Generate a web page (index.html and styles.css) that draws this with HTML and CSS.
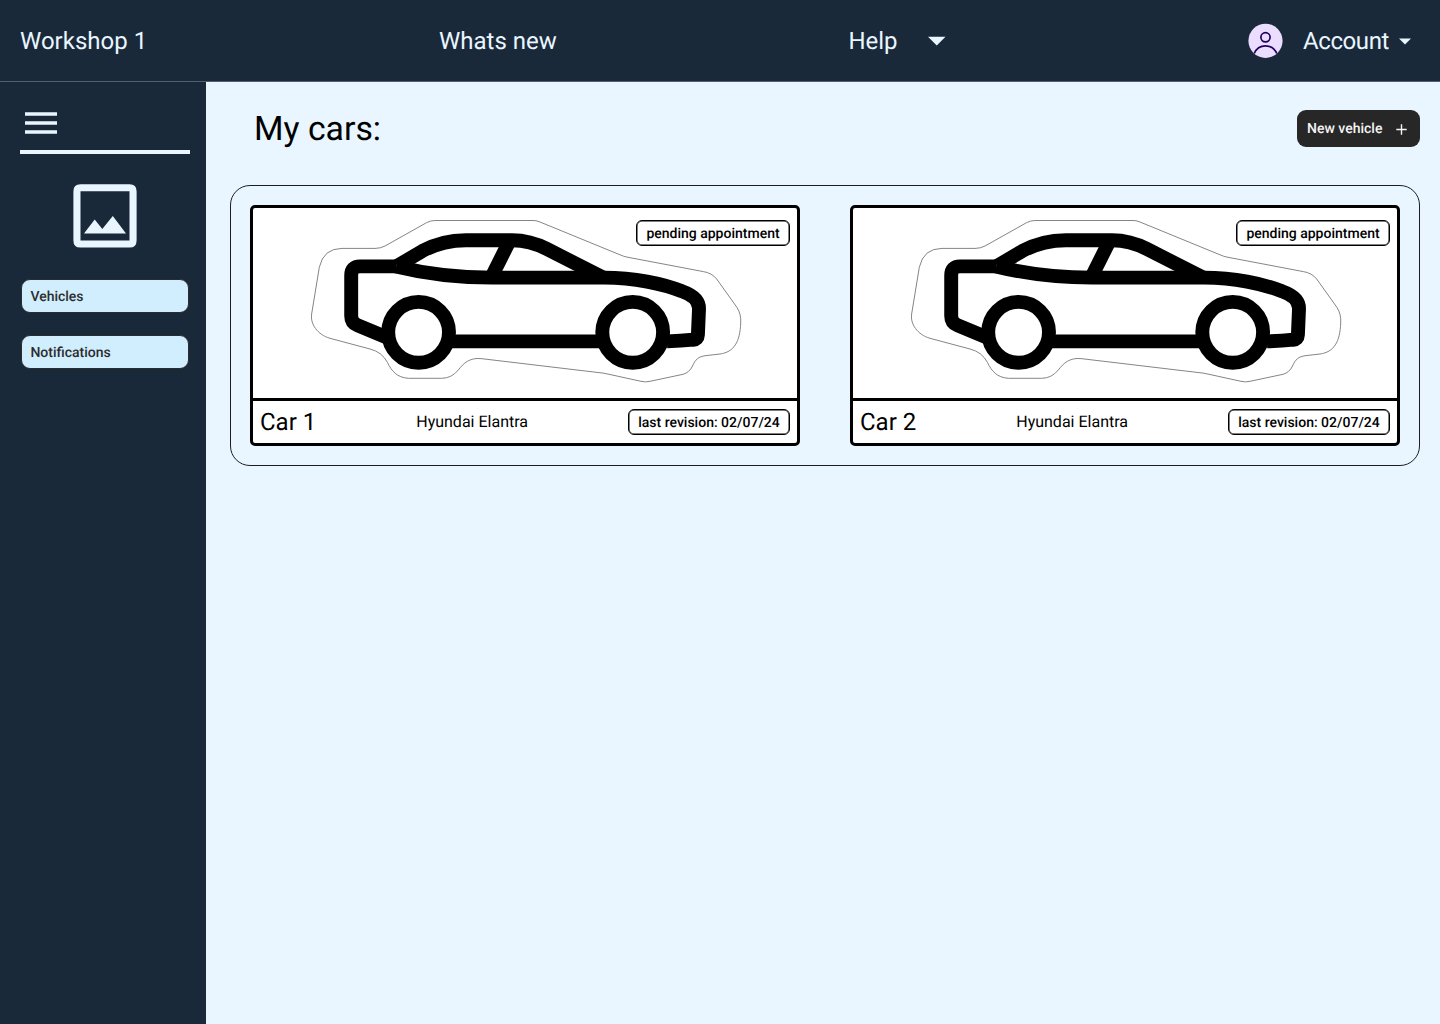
FILE: index.html
```html
<!DOCTYPE html>
<html lang="en">
<head>
<meta charset="utf-8">
<title>Workshop 1</title>
<link rel="stylesheet" href="styles.css">
</head>
<body>
<svg class="defs" aria-hidden="true">
  <symbol id="car" viewBox="253 208 544 190">
    <path class="halo" d="M311.8 313 L319.3 267.3 Q323.500 248.400 342 248.400 H375 Q380.500 248.400 385 246 L426.500 222.700 Q430.500 220.500 435 220.500 H533 Q536 220.500 539 221.600 L620 254.800 Q623.500 256.400 627 257.100 L703.300 271.600 Q711.500 272.800 716.700 279 L737 307.500 Q741.300 314 740.700 323 C740 342 734 352 720 354 L706 355.600 C698 356.600 695.500 359.500 692.500 366 Q689.500 372.500 683 374.300 L650 381.300 Q645.500 382.500 641 381.300 L610 374.500 L603 373.100 L481 358.600 C470 357.500 463.500 363 458.300 370 Q451.500 378.300 441.700 378.300 H408.300 C397 377.500 391.500 371 387.500 362.500 Q382 352 370 349 L330 338.300 C318 335 309.500 324 311.800 313 Z"/>
    <g class="body">
      <path d="M396 266.400 H360 Q351.200 266.400 351.200 275.500 V316 Q351.200 322.800 357.500 325.300 L387 337.500"/>
      <path d="M396 266.400 C426 273.800 457 277.500 492 277.600 H604 C634 277.700 663 283.500 682 291.300 Q699.400 297.500 699 309 L697.900 335 Q697.700 339.400 693.300 339.700 Q681 341 667 341.400"/>
      <path d="M450 341.400 H601"/>
      <path d="M397 266 L422 251.200 Q442 240.200 466 240.200 H512 Q530 240.200 547 249 L603 277.500"/>
      <path d="M509.500 241 L493 274"/>
      <circle cx="418.600" cy="332.300" r="30.400"/>
      <circle cx="632.700" cy="332.300" r="30.400"/>
    </g>
  </symbol>
</svg>

<header class="topbar">
  <a class="nav-item">Workshop 1</a>
  <a class="nav-item">Whats new</a>
  <a class="nav-item nav-help">Help
    <svg class="caret" width="18" height="11" viewBox="0 0 18 11"><path d="M0 1.700H17.500L8.750 10.500Z"/></svg>
  </a>
  <a class="nav-item nav-account">
    <svg class="avatar" width="36" height="36" viewBox="0 0 36 36">
      <circle class="avatar-bg" cx="17.500" cy="17.800" r="17.100"/>
      <circle class="avatar-line" cx="17.500" cy="14.300" r="4.600"/>
      <path class="avatar-line" d="M6.200 30.500 C10.500 20.300 24.500 20.300 28.800 30.500"/>
    </svg>
    <span>Account</span>
    <svg class="caret" width="12" height="8" viewBox="0 0 12 8"><path d="M0 1.500H12L6 7.500Z"/></svg>
  </a>
</header>

<div class="layout">
  <aside class="sidebar">
    <div class="menu">
      <svg width="32" height="22" viewBox="0 0 32 22"><path d="M0 .2H32V3.700H0ZM0 9.200H32V12.700H0ZM0 18.200H32V21.700H0Z"/></svg>
    </div>
    <svg class="picture" width="64" height="64" viewBox="0 0 64 64">
      <path fill-rule="evenodd" d="M7.500 .2H56.500Q63.600 .2 63.600 7.200V56.500Q63.600 63.600 56.500 63.600H7.500Q.4 63.600 .4 56.500V7.200Q.4 .2 7.500 .2ZM7.500 7.300V56.500H56.500V7.300ZM11 49.400L21.700 35.400L29.300 44.900L39.800 31.900L53 49.400Z"/>
    </svg>
    <a class="side-link">Vehicles</a>
    <a class="side-link">Notifications</a>
  </aside>

  <main class="content">
    <div class="heading">
      <h1>My cars:</h1>
      <button class="new-vehicle">New vehicle
        <svg width="11" height="11" viewBox="0 0 11 11"><path d="M5.500 .3V10.700M.3 5.500H10.700"/></svg>
      </button>
    </div>
    <section class="cars">
      <article class="card">
        <div class="media">
          <svg class="car"><use href="#car"/></svg>
          <span class="tag pending">pending appointment</span>
        </div>
        <div class="info">
          <h2>Car 1</h2>
          <span class="model">Hyundai Elantra</span>
          <span class="tag">last revision: 02/07/24</span>
        </div>
      </article>
      <article class="card">
        <div class="media">
          <svg class="car"><use href="#car"/></svg>
          <span class="tag pending">pending appointment</span>
        </div>
        <div class="info">
          <h2>Car 2</h2>
          <span class="model">Hyundai Elantra</span>
          <span class="tag">last revision: 02/07/24</span>
        </div>
      </article>
    </section>
  </main>
</div>
</body>
</html>
```
FILE: styles.css
```css
* { box-sizing: border-box; }

body {
  margin: 0;
  min-height: 1024px;
  display: flex;
  flex-direction: column;
  background: #e9f6ff;
  color: #000;
  font-family: Roboto, "Liberation Sans", sans-serif;
  text-rendering: geometricPrecision;
}

.defs { display: none; }
svg { display: block; flex: none; }

.topbar {
  height: 82px;
  display: grid;
  grid-template-columns: 419px 409px 400px auto;
  align-items: center;
  padding-left: 20px;
  background: #19293a;
  border-bottom: 1px solid #536070;
}

.nav-item {
  display: flex;
  align-items: center;
  color: #e9f6ff;
  font-size: 24px;
  line-height: 28px;
  white-space: nowrap;
}

.caret { fill: #e9f6ff; }
.nav-help { gap: 30px; padding-left: .4px; }
.nav-account span {
  width: 87px;
  margin: 0 9px 0 19px;
  letter-spacing: -.4px;
}
.avatar-bg { fill: #eaddff; }
.avatar-line { fill: none; stroke: #21005d; stroke-width: 1.7px; }

.layout { flex: 1; display: flex; }

.sidebar {
  width: 206px;
  padding: 30px 16px 0 20px;
  display: flex;
  flex-direction: column;
  background: #19293a;
}

.menu {
  height: 42px;
  padding-left: 5px;
  border-bottom: 4px solid #e9f6ff;
}

.menu svg, .picture { fill: #e9f6ff; }
.picture { align-self: center; margin: 30px 0 31px; }

.side-link {
  height: 34px;
  margin: 0 1px 22px;
  padding-left: 8.400px;
  border: 1px solid #2c2c2c;
  border-radius: 9px;
  background: #d1eeff;
  color: #2c2c2c;
  font-size: 14px;
  font-weight: 500;
  line-height: 34px;
}

.content { flex: 1; padding: 28px 20px 0 24px; }

.heading {
  height: 37px;
  padding-left: 24px;
  display: flex;
  align-items: center;
  justify-content: space-between;
}

h1 { margin: 0; padding-top: 2px; font-size: 33.800px; font-weight: 400; line-height: 40px; }

.new-vehicle {
  width: 123px;
  height: 37px;
  padding: 1px 13px 0 10px;
  display: flex;
  align-items: center;
  justify-content: space-between;
  border: 0;
  border-radius: 9px;
  background: #272727;
  color: #f5f5f5;
  font: 500 14px/20px Roboto, "Liberation Sans", sans-serif;
  text-rendering: geometricPrecision;
}

.new-vehicle path { stroke: #f5f5f5; stroke-width: 1.4px; }

.cars {
  height: 281px;
  margin-top: 38px;
  padding: 19px;
  display: flex;
  justify-content: space-between;
  border: 1px solid #1e1e1e;
  border-radius: 20px;
}

.card {
  width: 550px;
  height: 241px;
  border: 3px solid #000;
  border-radius: 5px;
  background: #fff;
}

.media { position: relative; height: 193px; border-bottom: 3px solid #000; }
.car { width: 544px; height: 190px; }
.halo { fill: none; stroke: #858585; stroke-width: 1px; }
.body { fill: none; stroke: #000; stroke-width: 13.900px; }

.tag {
  width: 162px;
  height: 26px;
  border: 1px solid #000;
  border-radius: 6px;
  box-shadow: inset 0 0 0 .5px #000;
  font-size: 14px;
  font-weight: 500;
  line-height: 26px;
  text-align: center;
  white-space: nowrap;
}

.pending { position: absolute; top: 12px; right: 7px; width: 154px; }

.info {
  height: 42px;
  padding: 0 7px;
  display: flex;
  align-items: center;
  justify-content: space-between;
}

h2 { margin: 0; font-size: 24px; font-weight: 400; line-height: 28px; }
.model { font-size: 16px; line-height: 20px; }
```
